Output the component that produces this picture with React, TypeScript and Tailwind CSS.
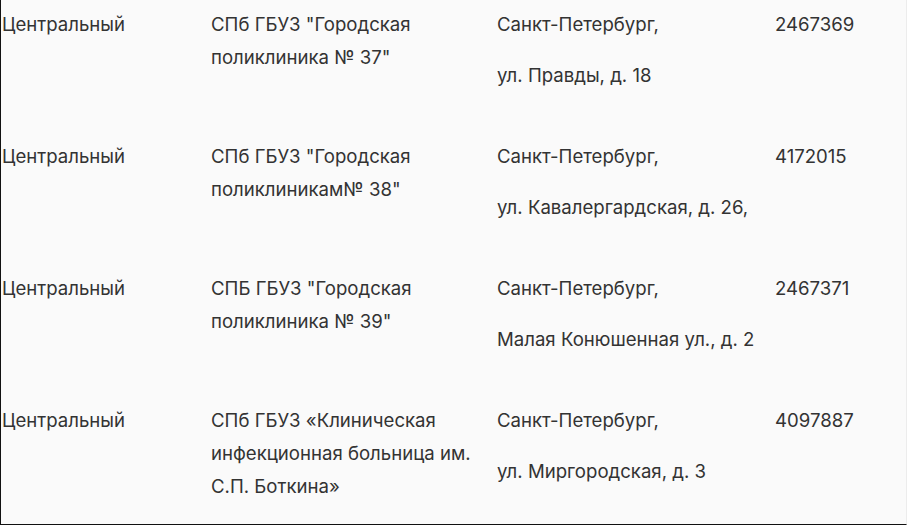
const rows = [
  {
    district: 'Центральный',
    name: ['СПб ГБУЗ "Городская', 'поликлиника № 37"'],
    city: 'Санкт-Петербург,',
    street: 'ул. Правды, д. 18',
    phone: '2467369',
  },
  {
    district: 'Центральный',
    name: ['СПб ГБУЗ "Городская', 'поликлиникам№ 38"'],
    city: 'Санкт-Петербург,',
    street: 'ул. Кавалергардская, д. 26,',
    phone: '4172015',
  },
  {
    district: 'Центральный',
    name: ['СПБ ГБУЗ "Городская', 'поликлиника № 39"'],
    city: 'Санкт-Петербург,',
    street: 'Малая Конюшенная ул., д. 2',
    phone: '2467371',
  },
  {
    district: 'Центральный',
    name: ['СПб ГБУЗ «Клиническая', 'инфекционная больница им.', 'С.П. Боткина»'],
    city: 'Санкт-Петербург,',
    street: 'ул. Миргородская, д. 3',
    phone: '4097887',
  },
];

export default function App() {
  return (
    <div className="w-[908px] h-[526px] bg-white overflow-hidden">
      <div className="w-[907px] h-[525px] bg-[#fafafa] border-l border-b border-[#111] border-r border-r-[#ececec] text-[18.6px] leading-[33px] text-[#333] font-['Inter','Liberation_Sans',sans-serif]">
        {rows.map((r, i) => (
          <div
            key={i}
            className="grid grid-cols-[209px_286px_278px_1fr] h-[132px] pt-[8px]"
          >
            <div className="pl-[1px]">{r.district}</div>
            <div className="pl-[1px]">
              {r.name.map((l, j) => (
                <div key={j}>{l}</div>
              ))}
            </div>
            <div className="pl-[1px]">
              <p>{r.city}</p>
              <p className="mt-[18px]">{r.street}</p>
            </div>
            <div className="pl-[1px]">{r.phone}</div>
          </div>
        ))}
      </div>
    </div>
  );
}
